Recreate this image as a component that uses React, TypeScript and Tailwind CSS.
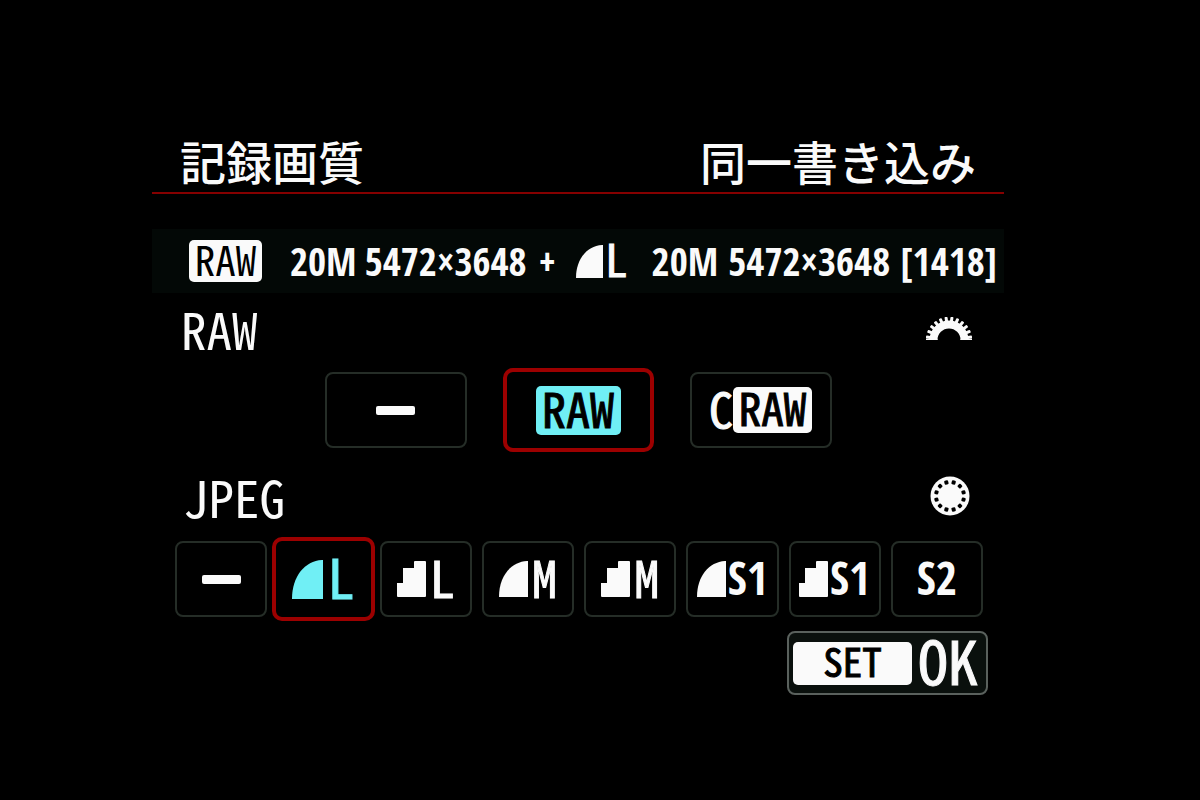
import { useState, type ReactNode } from 'react';
import clsx from 'clsx';

const mono = "font-['Noto_Sans_Mono_CJK_JP','Noto_Sans_CJK_JP',monospace]";
// a thin stroke puts the weight between regular and bold
const stroked = '[-webkit-text-stroke:1px]';
const condensed = "font-['Open_Sans_Condensed','Open_Sans',sans-serif]";

function Dash() {
  return <span className="block h-[9px] w-[39px] rounded-xs bg-current" />;
}

function FineIcon({ className }: { className: string }) {
  return (
    <svg viewBox="0 0 29 36" preserveAspectRatio="none" fill="currentColor" className={className}>
      <path d="M28 0h1v36H0C0 15 12 1 28 0z" />
    </svg>
  );
}

function NormalIcon({ className }: { className: string }) {
  return (
    <svg viewBox="0 0 29 36" fill="currentColor" className={className}>
      <path d="M1 36a1 1 0 0 1-1-1V22h6V7h11V1a1 1 0 0 1 1-1h10a1 1 0 0 1 1 1v34a1 1 0 0 1-1 1z" />
    </svg>
  );
}

function MainDial() {
  const teeth = Array.from({ length: 12 }, (_, i) => -82.5 + i * 15);
  return (
    <svg viewBox="0 0 46 24" className="h-6 w-[46px]">
      <path d="M3.5 24a19.5 19.5 0 0 1 39 0h-8a11.5 11.5 0 0 0-23 0z" fill="currentColor" />
      {teeth.map((a) => (
        <rect key={a} x="21.5" y="0.8" width="3" height="5" rx="0.8" fill="currentColor" transform={`rotate(${a} 23 24)`} />
      ))}
      <path d="M0 22.8h11.5V24H0zM34.5 22.8H46V24H34.5z" fill="currentColor" />
    </svg>
  );
}

function QuickDial() {
  const holes = Array.from({ length: 12 }, (_, i) => 15 + i * 30);
  return (
    <svg viewBox="0 0 40 40" className="size-10">
      <circle cx="20" cy="20" r="19.5" fill="currentColor" />
      {holes.map((a) => (
        <rect key={a} x="18" y="4" width="4" height="4" rx="1" fill="#000" transform={`rotate(${a} 20 20)`} />
      ))}
    </svg>
  );
}

function RawBadge({ className }: { className: string }) {
  return (
    <span className={clsx('flex shrink-0 items-center justify-center rounded-[5px] pb-1.5 text-black', mono, className)}>
      RAW
    </span>
  );
}

type OptionProps = {
  label: string;
  selected: boolean;
  onSelect: () => void;
  wide?: boolean;
  children: ReactNode;
};

function Option({ label, selected, onSelect, wide, children }: OptionProps) {
  return (
    <button
      type="button"
      aria-label={label}
      aria-pressed={selected}
      onClick={onSelect}
      className={clsx(
        'flex items-center justify-center',
        selected
          ? 'h-[84px] rounded-[10px] border-4 border-[#9c0000] text-[#70eff5]'
          : 'h-[76px] rounded-lg border-2 border-[#252d27]',
        wide && (selected ? 'w-[151px]' : 'w-[142px]'),
        !wide && !selected && 'mx-[5px]',
      )}
    >
      {children}
    </button>
  );
}

const jpegSizes = ['none', 'fine-L', 'normal-L', 'fine-M', 'normal-M', 'fine-S1', 'normal-S1', 'S2'];

function JpegLabel({ size, selected }: { size: string; selected: boolean }) {
  if (size === 'none') return <Dash />;
  const numbered = clsx(condensed, 'pb-1 text-[46px] leading-[56px] font-semibold');
  const [quality, letter] = size.split('-');
  if (!letter) return <span className={numbered}>{quality}</span>;

  const mark = selected ? 'h-[39px] w-[31px]' : 'h-9 w-[29px]';
  return (
    <span className={clsx('flex items-center', letter === 'S1' ? 'gap-0.5' : 'gap-1')}>
      {quality === 'fine' ? <FineIcon className={mark} /> : <NormalIcon className={mark} />}
      {letter === 'S1' ? (
        <span className={numbered}>{letter}</span>
      ) : (
        <span className={clsx(mono, stroked, 'pb-1.5 leading-[56px]', selected ? 'text-[54px]' : 'text-[50px]')}>
          {letter}
        </span>
      )}
    </span>
  );
}

export default function App() {
  const [raw, setRaw] = useState('RAW');
  const [jpeg, setJpeg] = useState('fine-L');

  return (
    <main className="min-h-screen bg-black pt-[132px] pr-[196px] pl-[152px] text-[#fafafa]">
      <header className="flex items-center justify-between border-b-2 border-[#850000] px-7 pb-1 font-['Noto_Sans_CJK_JP',sans-serif] text-[46px] leading-[56px] font-medium whitespace-nowrap">
        <h1>記録画質</h1>
        <p>同一書き込み</p>
      </header>

      <div
        className={clsx(
          'mt-[35px] flex h-16 items-center bg-[#030806] pl-[37px] text-[39px] leading-[56px] font-semibold whitespace-nowrap',
          condensed,
        )}
      >
        <RawBadge className="h-[42px] w-[73px] bg-[#fafafa] text-[41px] font-normal" />
        <span className="ml-7">20M</span>
        <span className="ml-2">5472×3648</span>
        <span className="ml-3">+</span>
        <span className="ml-5 flex items-center gap-0.5">
          <FineIcon className="h-[33px] w-[27px]" />
          <span className={clsx(mono, stroked, 'pb-1.5 text-[45px] font-normal')}>L</span>
        </span>
        <span className="ml-6">20M</span>
        <span className="ml-2.5">5472×3648</span>
        <span className="ml-2.5">[1418]</span>
      </div>

      <section>
        <div className="mt-[7px] flex items-center justify-between pr-8 pl-[29px]">
          <h2 className={clsx(mono, 'text-[51px] leading-[56px]')}>RAW</h2>
          <MainDial />
        </div>
        <div className="mt-3 flex items-center justify-center gap-9">
          <Option wide label="RAW なし" selected={raw === 'none'} onSelect={() => setRaw('none')}>
            <Dash />
          </Option>
          <Option wide label="RAW" selected={raw === 'RAW'} onSelect={() => setRaw('RAW')}>
            <RawBadge className={clsx(stroked, 'h-[49px] w-[85px] bg-[#70eff5] text-[48px]')} />
          </Option>
          <Option wide label="C-RAW" selected={raw === 'CRAW'} onSelect={() => setRaw('CRAW')}>
            <span className={clsx(mono, stroked, 'pb-1.5 text-[48px] leading-[56px]')}>C</span>
            <RawBadge className={clsx(stroked, 'h-[46px] w-[79px] bg-[#fafafa] text-[45px]')} />
          </Option>
        </div>
      </section>

      <section>
        <div className="mt-4 flex items-center justify-between pr-[34px] pl-[31px]">
          <h2 className={clsx(mono, 'text-[51px] leading-[56px]')}>JPEG</h2>
          <QuickDial />
        </div>
        <div className="mt-[13px] grid grid-cols-8 items-center pr-4 pl-[18px]">
          {jpegSizes.map((size) => (
            <Option key={size} label={`JPEG ${size}`} selected={jpeg === size} onSelect={() => setJpeg(size)}>
              <JpegLabel size={size} selected={jpeg === size} />
            </Option>
          ))}
        </div>
      </section>

      <div className="mt-2.5 flex justify-end pr-4">
        <button
          type="button"
          className={clsx(
            mono,
            stroked,
            'flex h-16 items-center gap-1.5 rounded-lg border-2 border-[#5a615d] bg-[#0a100d] pr-2 pl-1',
          )}
        >
          <span className="flex h-[43px] w-[119px] items-center justify-center rounded-[5px] bg-[#fafafa] pb-1.5 text-[39px] text-black">
            SET
          </span>
          <span className="pb-2 text-[60px] leading-[56px]">OK</span>
        </button>
      </div>
    </main>
  );
}
